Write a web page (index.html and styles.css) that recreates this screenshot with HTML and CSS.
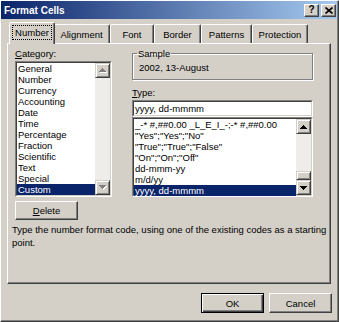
FILE: index.html
```html
<!DOCTYPE html>
<html lang="en">

<head>
    <meta charset="UTF-8">
    <title>Format Cells</title>
    <link rel="stylesheet" href="styles.css">
</head>

<body>
    <div class="window">
        <div class="titlebar">
            <span class="title">Format Cells</span>
            <div class="caption-btns">
                <span class="cap-btn">?</span>
                <span class="cap-btn">
                    <svg width="8" height="7" viewBox="0 0 8 7">
                        <path d="M0.5 0.5L7.5 6.5M7.5 0.5L0.5 6.5" stroke="#000" stroke-width="1.6" />
                    </svg>
                </span>
            </div>
        </div>

        <div class="tabs">
            <div class="tab active t-number"><span class="focus">Number</span></div>
            <div class="tab t-align">Alignment</div>
            <div class="tab t-font">Font</div>
            <div class="tab t-border">Border</div>
            <div class="tab t-patterns">Patterns</div>
            <div class="tab t-protection">Protection</div>
        </div>

        <div class="panel">
            <div class="columns">
                <div class="col-left">
                    <div class="label"><u>C</u>ategory:</div>
                    <div class="listbox cat-list">
                        <div class="listbox-inner">
                            <ul class="items">
                                <li>General</li>
                                <li>Number</li>
                                <li>Currency</li>
                                <li>Accounting</li>
                                <li>Date</li>
                                <li>Time</li>
                                <li>Percentage</li>
                                <li>Fraction</li>
                                <li>Scientific</li>
                                <li>Text</li>
                                <li>Special</li>
                                <li class="selected">Custom</li>
                            </ul>
                            <div class="scrollbar disabled">
                                <div class="arrow">
                                    <svg width="8" height="5" viewBox="0 0 8 5">
                                        <path class="shade" transform="translate(1 1)" d="M3 0h1v1h1v1h1v1h1v1H0V3h1V2h1V1h1z" />
                                        <path class="glyph" d="M3 0h1v1h1v1h1v1h1v1H0V3h1V2h1V1h1z" />
                                    </svg>
                                </div>
                                <div class="track"></div>
                                <div class="arrow">
                                    <svg width="8" height="5" viewBox="0 0 8 5">
                                        <path class="shade" transform="translate(1 1)" d="M0 0h7v1H6v1H5v1H4v1H3V3H2V2H1V1H0z" />
                                        <path class="glyph" d="M0 0h7v1H6v1H5v1H4v1H3V3H2V2H1V1H0z" />
                                    </svg>
                                </div>
                            </div>
                        </div>
                    </div>
                </div>

                <div class="col-right">
                    <fieldset class="sample">
                        <legend>Sample</legend>
                        <div class="sample-text">2002, 13-August</div>
                    </fieldset>
                    <div class="label type-label"><u>T</u>ype:</div>
                    <div class="textbox">
                        <div class="listbox-inner">yyyy, dd-mmmm</div>
                    </div>
                    <div class="listbox type-list">
                        <div class="listbox-inner">
                            <ul class="items">
                                <li>_-* #,##0.00 _L_E_I_-;-* #,##0.00</li>
                                <li>"Yes";"Yes";"No"</li>
                                <li>"True";"True";"False"</li>
                                <li>"On";"On";"Off"</li>
                                <li>dd-mmm-yy</li>
                                <li>m/d/yy</li>
                                <li class="selected">yyyy, dd-mmmm</li>
                            </ul>
                            <div class="scrollbar">
                                <div class="arrow">
                                    <svg width="7" height="4" viewBox="0 0 7 4">
                                        <path d="M3 0h1v1h1v1h1v1h1v1H0V3h1V2h1V1h1z" />
                                    </svg>
                                </div>
                                <div class="track"></div>
                                <div class="thumb"></div>
                                <div class="arrow">
                                    <svg width="7" height="4" viewBox="0 0 7 4">
                                        <path d="M0 0h7v1H6v1H5v1H4v1H3V3H2V2H1V1H0z" />
                                    </svg>
                                </div>
                            </div>
                        </div>
                    </div>
                </div>
            </div>

            <div class="btn delete"><span><u>D</u>elete</span></div>
            <p class="desc">Type the number format code, using one of the existing codes as a starting<br>point.</p>
        </div>

        <div class="buttons">
            <div class="btn default">OK</div>
            <div class="btn">Cancel</div>
        </div>
    </div>
</body>

</html>
```

FILE: styles.css
```css
* {
    margin: 0;
    padding: 0;
    box-sizing: border-box;
}

body {
    background-color: #d4d0c8;
    font-family: "Liberation Sans", Arial, sans-serif;
    font-size: 9.5px;
    color: #000;
}

ul {
    list-style: none;
}

u {
    text-decoration: underline;
}

.window {
    width: 339px;
    height: 322px;
    border: 1px solid;
    border-color: #fff #404040 #404040 #fff;
    box-shadow: inset -1px -1px #808080;
}

/* title bar */
.titlebar {
    height: 18px;
    margin-right: 1px;
    padding: 0 1px 0 3px;
    background: linear-gradient(to right, #0a246a, #a6caf0);
    display: flex;
    align-items: center;
    justify-content: space-between;
}

.title {
    color: #fff;
    font-weight: bold;
    font-size: 10px;
}

.caption-btns {
    display: flex;
    gap: 2px;
}

.cap-btn {
    width: 15px;
    height: 13px;
    background-color: #d4d0c8;
    border: 1px solid;
    border-color: #fff #404040 #404040 #fff;
    box-shadow: inset -1px -1px #808080;
    display: flex;
    align-items: center;
    justify-content: center;
    font-weight: bold;
    font-size: 10px;
    line-height: 1;
}

/* tabs */
.tabs {
    display: flex;
    align-items: flex-end;
    height: 22px;
    margin-top: 2px;
    padding-left: 10px;
}

.tab {
    height: 19px;
    border: 1px solid;
    border-bottom: 0;
    border-color: #fff #404040 transparent #fff;
    border-radius: 2px 2px 0 0;
    box-shadow: inset -1px 0 #808080;
    display: flex;
    align-items: center;
    justify-content: center;
    background-color: #d4d0c8;
}

.tab.active {
    height: 22px;
    margin: 0 -2px -1px;
    position: relative;
    z-index: 1;
    padding-bottom: 2px;
}

.focus {
    outline: 1px dotted #000;
    padding: 1px 2px;
}

.t-number { width: 46px; }
.t-align { width: 57px; }
.t-font { width: 44px; }
.t-border { width: 47px; }
.t-patterns { width: 51px; }
.t-protection { width: 56px; }

/* panel */
.panel {
    margin-left: 6px;
    width: 324px;
    height: 241px;
    border: 1px solid;
    border-color: #fff #404040 #404040 #fff;
    box-shadow: inset -1px -1px #808080;
    padding: 4px 0 0 7px;
}

.columns {
    display: flex;
    gap: 20px;
}

.col-left {
    width: 97px;
}

.col-right {
    width: 181px;
}

.label {
    height: 11px;
    line-height: 11px;
    margin-bottom: 2px;
}

.listbox,
.textbox {
    background-color: #fff;
    border: 1px solid;
    border-color: #808080 #fff #fff #808080;
}

.listbox-inner {
    height: 100%;
    border: 1px solid;
    border-color: #404040 #d4d0c8 #d4d0c8 #404040;
    display: flex;
}

.cat-list {
    height: 136px;
}

.type-list {
    height: 80px;
}

.textbox {
    height: 17px;
}

.textbox .listbox-inner {
    align-items: center;
    padding-left: 1px;
    line-height: 11px;
}

.items {
    flex: 1;
    min-width: 0;
}

.items li {
    height: 11px;
    line-height: 11px;
    padding-left: 1px;
    white-space: nowrap;
}

.items li.selected {
    background-color: #0a246a;
    color: #fff;
}

/* scrollbars */
.scrollbar {
    width: 15px;
    flex-shrink: 0;
    display: flex;
    flex-direction: column;
    background-color: #eeede9;
}

.arrow,
.thumb {
    background-color: #d4d0c8;
    border: 1px solid;
    border-color: #d4d0c8 #404040 #404040 #d4d0c8;
    box-shadow: inset 1px 1px #fff, inset -1px -1px #808080;
}

.arrow {
    height: 15px;
    display: flex;
    align-items: center;
    justify-content: center;
}

.arrow svg {
    fill: #000;
}

.disabled .arrow .glyph {
    fill: #808080;
}

.disabled .arrow .shade {
    fill: #fff;
}

.track {
    flex: 1;
}

.thumb {
    height: 9px;
}

/* sample group */
.sample {
    border: 1px solid #808080;
    box-shadow: 1px 1px #fff, inset 1px 1px #fff;
    padding: 3px 6px 6px;
}

.sample legend {
    margin-left: -2px;
    padding: 0 1px;
    line-height: 11px;
}

.sample-text {
    line-height: 11px;
}

.type-label {
    margin-top: 7px;
}

/* buttons */
.btn {
    width: 63px;
    display: flex;
    align-items: center;
    justify-content: center;
    background-color: #d4d0c8;
    border: 1px solid;
    border-color: #fff #404040 #404040 #fff;
    box-shadow: inset -1px -1px #808080;
}

.btn.default {
    border-color: #000;
    box-shadow: inset 1px 1px #fff, inset -1px -1px #404040, inset -2px -2px #808080;
}

.delete {
    height: 19px;
    margin-top: 4px;
}

.desc {
    margin: 3px 0 0 -3px;
    line-height: 13px;
    white-space: nowrap;
}

.buttons {
    display: flex;
    justify-content: flex-end;
    gap: 5px;
    margin-top: 9px;
    padding-right: 6px;
}

.buttons .btn {
    height: 20px;
}
```
